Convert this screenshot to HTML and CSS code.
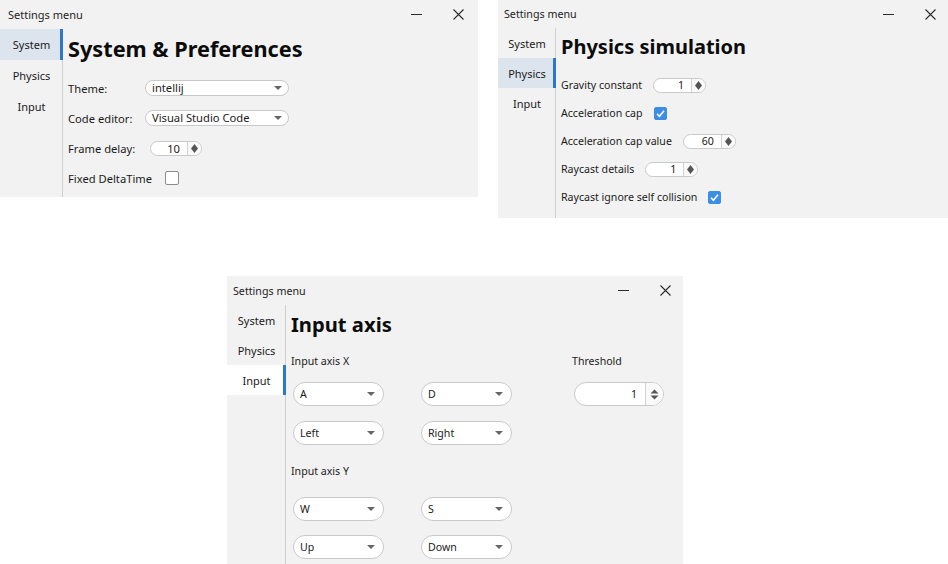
FILE: index.html
```html
<!DOCTYPE html>
<html>
<head>
<meta charset="utf-8">
<title>Settings menu</title>
<link rel="stylesheet" href="styles.css">
</head>
<body>
<div class="desk">

  <!-- Window 1 : System -->
  <section class="win win-sys">
    <header class="titlebar">
      <span class="title">Settings menu</span>
      <div class="controls">
        <span class="ctl ctl-min"><svg width="11" height="1" viewBox="0 0 11 1"><rect width="11" height="1" fill="#2b2b2b"/></svg></span>
        <span class="ctl ctl-close"><svg width="11" height="11" viewBox="0 0 11 11"><path d="M0.5 0.5L10.5 10.5M10.5 0.5L0.5 10.5" stroke="#2b2b2b" stroke-width="1.1" fill="none"/></svg></span>
      </div>
    </header>
    <div class="body">
      <nav class="side">
        <div class="item sel">System</div>
        <div class="item">Physics</div>
        <div class="item">Input</div>
      </nav>
      <main class="content">
        <h1 class="heading">System &amp; Preferences</h1>
        <div class="form">
          <div class="row">
            <span class="lbl">Theme:</span>
            <span class="combo combo-sm"><span class="val">intellij</span><svg class="arr" width="8" height="4" viewBox="0 0 8 4"><path d="M0 0H8L4 4Z" fill="#666"/></svg></span>
          </div>
          <div class="row">
            <span class="lbl">Code editor:</span>
            <span class="combo combo-sm"><span class="val">Visual Studio Code</span><svg class="arr" width="8" height="4" viewBox="0 0 8 4"><path d="M0 0H8L4 4Z" fill="#666"/></svg></span>
          </div>
          <div class="row">
            <span class="lbl">Frame delay:</span>
            <span class="spin spin-sm spin-delay"><span class="num">10</span><span class="btn"><svg width="7" height="9" viewBox="0 0 7 9"><path d="M3.5 0L7 4.5L3.5 9L0 4.5Z" fill="#555"/></svg></span></span>
          </div>
          <div class="row">
            <span class="lbl">Fixed DeltaTime</span>
            <span class="check check-fixed"></span>
          </div>
        </div>
      </main>
    </div>
  </section>

  <!-- Window 2 : Physics -->
  <section class="win win-phys">
    <header class="titlebar">
      <span class="title">Settings menu</span>
      <div class="controls">
        <span class="ctl ctl-min"><svg width="11" height="1" viewBox="0 0 11 1"><rect width="11" height="1" fill="#2b2b2b"/></svg></span>
        <span class="ctl ctl-close"><svg width="11" height="11" viewBox="0 0 11 11"><path d="M0.5 0.5L10.5 10.5M10.5 0.5L0.5 10.5" stroke="#2b2b2b" stroke-width="1.1" fill="none"/></svg></span>
      </div>
    </header>
    <div class="body">
      <nav class="side">
        <div class="item">System</div>
        <div class="item sel">Physics</div>
        <div class="item">Input</div>
      </nav>
      <main class="content">
        <h1 class="heading">Physics simulation</h1>
        <div class="form">
          <div class="row">
            <span class="lbl">Gravity constant</span>
            <span class="spin spin-sm"><span class="num">1</span><span class="btn"><svg width="7" height="9" viewBox="0 0 7 9"><path d="M3.5 0L7 4.5L3.5 9L0 4.5Z" fill="#555"/></svg></span></span>
          </div>
          <div class="row">
            <span class="lbl">Acceleration cap</span>
            <span class="check on"><svg width="13" height="13" viewBox="0 0 13 13"><path d="M3 6.8L5.4 9.2L10 3.8" stroke="#fff" stroke-width="1.6" fill="none"/></svg></span>
          </div>
          <div class="row">
            <span class="lbl">Acceleration cap value</span>
            <span class="spin spin-sm"><span class="num">60</span><span class="btn"><svg width="7" height="9" viewBox="0 0 7 9"><path d="M3.5 0L7 4.5L3.5 9L0 4.5Z" fill="#555"/></svg></span></span>
          </div>
          <div class="row">
            <span class="lbl">Raycast details</span>
            <span class="spin spin-sm"><span class="num">1</span><span class="btn"><svg width="7" height="9" viewBox="0 0 7 9"><path d="M3.5 0L7 4.5L3.5 9L0 4.5Z" fill="#555"/></svg></span></span>
          </div>
          <div class="row">
            <span class="lbl">Raycast ignore self collision</span>
            <span class="check on"><svg width="13" height="13" viewBox="0 0 13 13"><path d="M3 6.8L5.4 9.2L10 3.8" stroke="#fff" stroke-width="1.6" fill="none"/></svg></span>
          </div>
        </div>
      </main>
    </div>
  </section>

  <!-- Window 3 : Input -->
  <section class="win win-input">
    <header class="titlebar">
      <span class="title">Settings menu</span>
      <div class="controls">
        <span class="ctl ctl-min"><svg width="11" height="1" viewBox="0 0 11 1"><rect width="11" height="1" fill="#2b2b2b"/></svg></span>
        <span class="ctl ctl-close"><svg width="11" height="11" viewBox="0 0 11 11"><path d="M0.5 0.5L10.5 10.5M10.5 0.5L0.5 10.5" stroke="#2b2b2b" stroke-width="1.1" fill="none"/></svg></span>
      </div>
    </header>
    <div class="body">
      <nav class="side">
        <div class="item">System</div>
        <div class="item">Physics</div>
        <div class="item sel">Input</div>
      </nav>
      <main class="content">
        <h1 class="heading">Input axis</h1>
        <div class="axes">
          <div class="col-left">
            <div class="sect">Input axis X</div>
            <div class="pair first">
              <span class="combo combo-lg"><span class="val">A</span><svg class="arr" width="8" height="4" viewBox="0 0 8 4"><path d="M0 0H8L4 4Z" fill="#666"/></svg></span>
              <span class="combo combo-lg"><span class="val">D</span><svg class="arr" width="8" height="4" viewBox="0 0 8 4"><path d="M0 0H8L4 4Z" fill="#666"/></svg></span>
              <span class="combo combo-lg"><span class="val">Left</span><svg class="arr" width="8" height="4" viewBox="0 0 8 4"><path d="M0 0H8L4 4Z" fill="#666"/></svg></span>
              <span class="combo combo-lg"><span class="val">Right</span><svg class="arr" width="8" height="4" viewBox="0 0 8 4"><path d="M0 0H8L4 4Z" fill="#666"/></svg></span>
            </div>
            <div class="sect sect-y">Input axis Y</div>
            <div class="pair second">
              <span class="combo combo-lg"><span class="val">W</span><svg class="arr" width="8" height="4" viewBox="0 0 8 4"><path d="M0 0H8L4 4Z" fill="#666"/></svg></span>
              <span class="combo combo-lg"><span class="val">S</span><svg class="arr" width="8" height="4" viewBox="0 0 8 4"><path d="M0 0H8L4 4Z" fill="#666"/></svg></span>
              <span class="combo combo-lg"><span class="val">Up</span><svg class="arr" width="8" height="4" viewBox="0 0 8 4"><path d="M0 0H8L4 4Z" fill="#666"/></svg></span>
              <span class="combo combo-lg"><span class="val">Down</span><svg class="arr" width="8" height="4" viewBox="0 0 8 4"><path d="M0 0H8L4 4Z" fill="#666"/></svg></span>
            </div>
          </div>
          <div class="col-right">
            <div class="sect">Threshold</div>
            <span class="spin spin-lg"><span class="num">1</span><span class="btn"><svg width="9" height="13" viewBox="0 0 9 13"><path d="M0.5 5.5L4.5 1.5L8.5 5.5Z M0.5 7.5L4.5 11.5L8.5 7.5Z" fill="#555"/></svg></span></span>
          </div>
        </div>
      </main>
    </div>
  </section>

</div>
</body>
</html>
```

FILE: styles.css
```css
* { box-sizing: border-box; }

html, body {
  margin: 0;
  padding: 0;
  background: #ffffff;
}

body {
  font-family: "Noto Sans", "Open Sans", sans-serif;
  font-size: 11px;
  color: #1b1b1b;
}

.desk {
  position: relative;
  width: 948px;
  height: 564px;
  overflow: hidden;
}

/* windows placed on the desktop canvas */
.win {
  position: absolute;
  background: #f2f2f2;
  display: flex;
  flex-direction: column;
  overflow: hidden;
  font-size: 10.6px;
}
.win-sys   { left: 0;     top: 0;     width: 478px; height: 197px; font-size: 11.2px; }
.win-phys  { left: 498px; top: 0;     width: 450px; height: 218px; }
.win-input { left: 227px; top: 276px; width: 456px; height: 288px; }

/* title bar */
.titlebar {
  height: 29px;
  flex: none;
  display: flex;
  align-items: center;
  padding-left: 6px;
}
.win-sys .titlebar { padding-left: 8px; }
.win-phys .titlebar { height: 28px; }

.title {
  font-size: 11px;
  color: #1e1e1e;
}
.win-phys .title, .win-input .title { font-size: 10.7px; }

.controls {
  margin-left: auto;
  display: flex;
  align-items: center;
  height: 100%;
}
.win-sys .controls { padding-right: 2px; }

.ctl {
  height: 100%;
  display: flex;
  align-items: center;
  justify-content: center;
}
.ctl-min { width: 48px; }
.ctl-close { width: 36px; }

/* body */
.body {
  flex: 1;
  display: flex;
  min-height: 0;
}

.side {
  flex: none;
  width: 59px;
  border-right: 1px solid #cfcfcf;
  display: flex;
  flex-direction: column;
}
.win-sys .side { width: 63px; }
.win-phys .side { width: 58px; }

.item {
  height: 30px;
  margin-right: -1px;
  display: flex;
  align-items: center;
  justify-content: center;
  font-size: 11px;
  color: #1b1b1b;
}
.win-sys .item { height: 31px; }

.item.sel {
  background: #dce4ed;
  box-shadow: inset -3px 0 0 #2f78c8;
}
.win-input .item.sel {
  background: #ffffff;
}

.content {
  flex: 1;
  padding-left: 5px;
  padding-top: 4px;
}
.win-sys .content { padding-top: 5px; }

.heading {
  margin: 0;
  font-size: 21.7px;
  line-height: 30px;
  font-weight: 700;
  color: #0c0c0c;
}
.win-phys .heading { font-size: 20px; }
.win-input .heading { font-size: 20.2px; }

/* rows */
.form {
  margin-top: 9px;
  display: flex;
  flex-direction: column;
}
.row {
  height: 30px;
  display: flex;
  align-items: center;
  gap: 11px;
}
.win-phys .row { height: 28px; }

.win-sys .lbl { width: 77px; flex: none; }
.win-sys .row { gap: 0; }

.lbl { white-space: nowrap; }

/* combo boxes */
.combo {
  display: flex;
  align-items: center;
  background: #ffffff;
  border: 1px solid #c9c9c9;
  border-radius: 12px;
}
.combo .val { flex: 1; white-space: nowrap; }
.combo .arr { flex: none; }

.combo-sm {
  width: 144px;
  height: 16px;
  padding-left: 6px;
  padding-right: 6px;
  line-height: 14px;
}

.combo-lg {
  width: 91px;
  height: 24px;
  padding-left: 6px;
  padding-right: 8px;
}

/* spinners */
.spin {
  display: flex;
  align-items: stretch;
  background: #ffffff;
  border: 1px solid #c9c9c9;
  border-radius: 12px;
  overflow: hidden;
}
.spin .num {
  flex: 1;
  display: flex;
  align-items: center;
  justify-content: flex-end;
}
.spin .btn {
  flex: none;
  display: flex;
  align-items: center;
  justify-content: center;
  border-left: 1px solid #d2d2d2;
  background: #fafafa;
}

.spin-sm {
  width: 53px;
  height: 15px;
  line-height: 13px;
}
.spin-sm .num { padding-right: 7px; }
.spin-sm .btn { width: 14px; }
.spin-delay { margin-left: 5px; width: 52px; }

.spin-lg {
  width: 90px;
  height: 24px;
  margin-left: 2px;
}
.spin-lg .num { padding-right: 8px; }
.spin-lg .btn { width: 18px; }

/* checkboxes */
.check {
  width: 13px;
  height: 13px;
  flex: none;
  border: 1px solid #8c8c8c;
  border-radius: 2px;
  background: #ffffff;
  display: flex;
}
.check.on {
  background: #3b8ee3;
  border-color: #3b8ee3;
}
.check.on svg { margin: -1px; }
.check-fixed { margin-left: 20px; width: 14px; height: 14px; }

/* input axis layout */
.axes {
  display: flex;
  gap: 60px;
}
.col-left, .col-right {
  display: flex;
  flex-direction: column;
}
.sect {
  height: 20px;
  line-height: 20px;
  margin-top: 12px;
  white-space: nowrap;
}
.sect-y { margin-top: 16px; }

.pair {
  display: grid;
  grid-template-columns: 91px 91px;
  column-gap: 37px;
  margin-left: 2px;
}
.pair.first { margin-top: 11px; row-gap: 15px; }
.pair.second { margin-top: 16px; row-gap: 14px; }

.col-right .spin-lg { margin-top: 11px; }
```
